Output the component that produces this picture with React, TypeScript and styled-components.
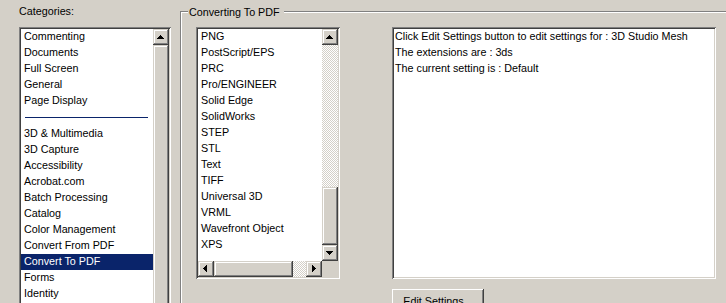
import React from "react";
import styled, { createGlobalStyle } from "styled-components";

const FACE = "#d4d0c8";
const SHADOW = "#808080";
const DARK = "#404040";
const HILITE = "#ffffff";
const SELECT = "#0a246a";
const FONT = `"Liberation Sans", Arial, sans-serif`;
const SIZE = "10.75px";

const Global = createGlobalStyle`
  html, body { margin: 0; padding: 0; background: ${FACE}; }
  body { font-family: ${FONT}; font-size: ${SIZE}; color: #000; }
`;

const Dialog = styled.div`
  display: flex;
  align-items: flex-start;
  width: 726px;
  height: 303px;
  overflow: hidden;
  background: ${FACE};
`;

const LeftColumn = styled.div`
  display: flex;
  flex-direction: column;
  flex: none;
  width: 152px;
  margin-left: 19px;
  padding-top: 5px;
`;

const Caption = styled.div`
  height: 13px;
  line-height: 13px;
  margin-bottom: 9px;
  white-space: nowrap;
`;

const Well = styled.div<{ $w: number; $h: number }>`
  box-sizing: border-box;
  flex: none;
  width: ${(p) => p.$w}px;
  height: ${(p) => p.$h}px;
  padding: 2px;
  background: #fff;
  box-shadow: inset 1px 1px ${SHADOW}, inset -1px -1px ${HILITE},
    inset 2px 2px ${DARK}, inset -2px -2px ${FACE};
`;

const ListWell = styled(Well)<{ $hScroll?: boolean }>`
  display: grid;
  grid-template-columns: 1fr 16px;
  grid-template-rows: ${(p) => (p.$hScroll ? "1fr 16px" : "1fr")};
`;

const Rows = styled.div`
  overflow: hidden;
  min-width: 0;
  min-height: 0;
`;

const Row = styled.div<{ $selected?: boolean }>`
  height: 16px;
  line-height: 15px;
  padding-left: 3px;
  white-space: nowrap;
  background: ${(p) => (p.$selected ? SELECT : "transparent")};
  color: ${(p) => (p.$selected ? "#fff" : "#000")};
`;

const Separator = styled.div`
  height: 17px;
  display: flex;
  align-items: center;
  padding: 0 5px 0 4px;
  &::after {
    content: "";
    flex: 1;
    height: 1px;
    background: ${SELECT};
  }
`;

const raised = `
  background: ${FACE};
  box-shadow: inset -1px -1px ${DARK}, inset 1px 1px ${FACE},
    inset -2px -2px ${SHADOW}, inset 2px 2px ${HILITE};
`;

const VScroll = styled.div`
  display: flex;
  flex-direction: column;
  min-height: 0;
  background-color: #fff;
  background-image: repeating-conic-gradient(${FACE} 0 25%, #fff 0 50%);
  background-size: 2px 2px;
`;

const HScroll = styled(VScroll)`
  flex-direction: row;
`;

const ScrollButton = styled.div<{ $top: number; $left: number }>`
  box-sizing: border-box;
  flex: none;
  width: 16px;
  height: 16px;
  display: flex;
  align-items: flex-start;
  justify-content: flex-start;
  padding: ${(p) => p.$top}px 0 0 ${(p) => p.$left}px;
  ${raised}
  svg {
    display: block;
    fill: #000;
  }
`;

const Thumb = styled.div<{ $size?: number; $horizontal?: boolean }>`
  ${raised}
  flex: ${(p) => (p.$size ? `none` : `1`)};
  ${(p) => (p.$size ? (p.$horizontal ? `width: ${p.$size}px;` : `height: ${p.$size}px;`) : "")}
`;

const Track = styled.div`
  flex: 1;
`;

const Corner = styled.div`
  background: ${FACE};
`;

const GroupBox = styled.div`
  position: relative;
  flex: none;
  width: 560px;
  height: 330px;
  margin-left: 9px;
  margin-top: 11px;
  border: 1px solid ${SHADOW};
  box-shadow: inset 1px 1px ${HILITE};
  padding: 15px 0 0 15px;
  display: flex;
  align-items: flex-start;
  gap: 52px;
`;

const Legend = styled.div`
  position: absolute;
  top: -6px;
  left: 7px;
  height: 13px;
  line-height: 13px;
  padding: 0 4px 0 1px;
  background: ${FACE};
  white-space: nowrap;
`;

const RightColumn = styled.div`
  display: flex;
  flex-direction: column;
  align-items: flex-start;
  flex: none;
`;

const InfoWell = styled(Well)`
  padding: 2px 2px 2px 3px;
`;

const InfoLine = styled.div`
  height: 16px;
  line-height: 15px;
  white-space: nowrap;
`;

const PushButton = styled.button`
  flex: none;
  margin-top: 10px;
  width: 92px;
  height: 23px;
  padding: 0;
  border: none;
  font-family: ${FONT};
  font-size: ${SIZE};
  color: #000;
  background: ${FACE};
  box-shadow: inset -1px -1px ${DARK}, inset 1px 1px ${HILITE},
    inset -2px -2px ${SHADOW}, inset 2px 2px ${FACE};
`;

type Dir = "up" | "down" | "left" | "right";
const ARROWS: Record<Dir, { w: number; h: number; d: string }> = {
  up: { w: 7, h: 4, d: "M3 0h1v1h1v1h1v1h1v1H0V3h1V2h1V1h1z" },
  down: { w: 7, h: 4, d: "M0 0h7v1H6v1H5v1H4v1H3V3H2V2H1V1H0z" },
  left: { w: 4, h: 7, d: "M3 0h1v7H3V6H2V5H1V4H0V3h1V2h1V1h1z" },
  right: { w: 4, h: 7, d: "M0 0h1v1h1v1h1v1h1v1H3v1H2v1H1v1H0z" },
};
const OFFSETS: Record<Dir, { top: number; left: number }> = {
  up: { top: 6, left: 4 },
  down: { top: 6, left: 4 },
  left: { top: 4, left: 5 },
  right: { top: 4, left: 6 },
};

const ArrowButton = ({ dir }: { dir: Dir }) => {
  const a = ARROWS[dir];
  const o = OFFSETS[dir];
  return (
    <ScrollButton $top={o.top} $left={o.left}>
      <svg width={a.w} height={a.h} viewBox={`0 0 ${a.w} ${a.h}`} shapeRendering="crispEdges">
        <path d={a.d} />
      </svg>
    </ScrollButton>
  );
};

const topCategories = ["Commenting", "Documents", "Full Screen", "General", "Page Display"];
const moreCategories = [
  "3D & Multimedia",
  "3D Capture",
  "Accessibility",
  "Acrobat.com",
  "Batch Processing",
  "Catalog",
  "Color Management",
  "Convert From PDF",
  "Convert To PDF",
  "Forms",
  "Identity",
];
const formats = [
  "PNG",
  "PostScript/EPS",
  "PRC",
  "Pro/ENGINEER",
  "Solid Edge",
  "SolidWorks",
  "STEP",
  "STL",
  "Text",
  "TIFF",
  "Universal 3D",
  "VRML",
  "Wavefront Object",
  "XPS",
];

export default function App() {
  return (
    <>
      <Global />
      <Dialog>
        <LeftColumn>
          <Caption>Categories:</Caption>
          <ListWell $w={152} $h={300}>
            <Rows>
              {topCategories.map((c) => (
                <Row key={c}>{c}</Row>
              ))}
              <Separator />
              {moreCategories.map((c) => (
                <Row key={c} $selected={c === "Convert To PDF"}>
                  {c}
                </Row>
              ))}
            </Rows>
            <VScroll>
              <ArrowButton dir="up" />
              <Thumb />
              <ArrowButton dir="down" />
            </VScroll>
          </ListWell>
        </LeftColumn>

        <GroupBox>
          <Legend>Converting To PDF</Legend>
          <ListWell $w={144} $h={252} $hScroll>
            <Rows>
              {formats.map((f) => (
                <Row key={f}>{f}</Row>
              ))}
            </Rows>
            <VScroll>
              <ArrowButton dir="up" />
              <Track />
              <Thumb $size={58} />
              <ArrowButton dir="down" />
            </VScroll>
            <HScroll>
              <ArrowButton dir="left" />
              <Thumb $size={79} $horizontal />
              <Track />
              <ArrowButton dir="right" />
            </HScroll>
            <Corner />
          </ListWell>

          <RightColumn>
            <InfoWell $w={324} $h={252}>
              <InfoLine>Click Edit Settings button to edit settings for : 3D Studio Mesh</InfoLine>
              <InfoLine>The extensions are : 3ds</InfoLine>
              <InfoLine>The current setting is : Default</InfoLine>
            </InfoWell>
            <PushButton type="button">Edit Settings...</PushButton>
          </RightColumn>
        </GroupBox>
      </Dialog>
    </>
  );
}
